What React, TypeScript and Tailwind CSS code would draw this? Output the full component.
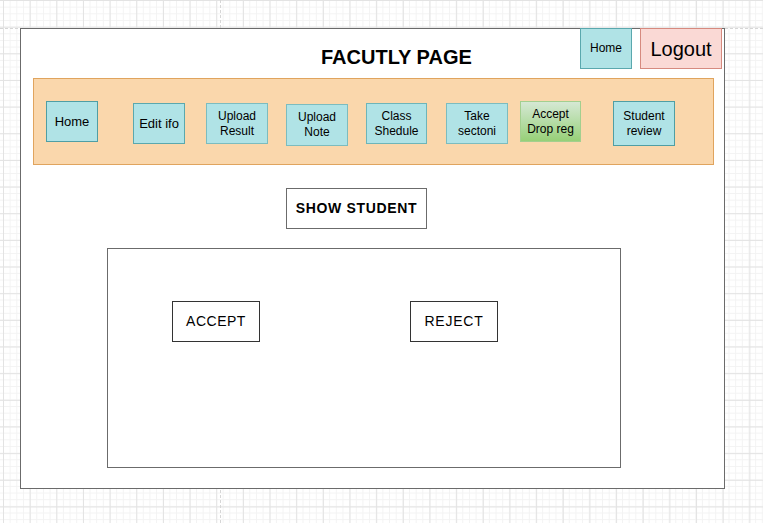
function Btn({
  label,
  className,
}: {
  label: React.ReactNode;
  className: string;
}) {
  return (
    <div
      className={
        "flex shrink-0 items-center justify-center border text-center leading-[15px] text-black " +
        className
      }
    >
      {label}
    </div>
  );
}

export default function App() {
  return (
    <div className="relative h-[523px] w-[763px] overflow-hidden bg-white font-['Liberation_Sans',Arial,sans-serif] [background-image:linear-gradient(to_right,#e3e3e3_1px,transparent_1px),linear-gradient(to_bottom,#e3e3e3_1px,transparent_1px),linear-gradient(to_right,#f3f3f3_1px,transparent_1px),linear-gradient(to_bottom,#f3f3f3_1px,transparent_1px)] [background-size:26.667px_26.667px,26.667px_26.667px,6.667px_6.667px,6.667px_6.667px] [background-position:3px_0px]">
      {/* page break guides */}
      <div className="absolute left-[220px] top-0 h-full border-l border-dashed border-[#d6d6d6]" />
      <div className="absolute left-0 top-[28px] w-full border-t border-dashed border-[#d6d6d6]" />

      {/* frame */}
      <div className="relative ml-[20px] mt-[28px] h-[461px] w-[705px] border border-[#6b6b6b] bg-white">
        <div className="-mt-px flex h-[41px] items-start">
          <div className="ml-[300px] mt-[17px] w-[259px] text-[20px] font-bold leading-[24px] text-black">
            FACUTLY PAGE
          </div>
          <Btn label="Home" className="h-[41px] w-[52px] border-[#5aa8ae] bg-[#b0e3e6] text-[12px]" />
          <div className="ml-[8px] flex h-[41px] w-[82px] items-center justify-center border border-[#d68a7f] bg-[#fad9d5] text-[20px] text-black">
            Logout
          </div>
        </div>

        {/* nav bar */}
        <div className="ml-[12px] mt-[9px] flex h-[87px] w-[681px] items-start border border-[#e0a45e] bg-[#fad7ac]">
          <Btn label="Home" className="ml-[12px] mt-[22px] h-[41px] w-[52px] border-[#4f9ea4] bg-[#b0e3e6] text-[13px]" />
          <Btn label="Edit ifo" className="ml-[35px] mt-[24px] h-[41px] w-[52px] border-[#5aa8ae] bg-[#b0e3e6] text-[13px]" />
          <Btn
            label={<>Upload<br />Result</>}
            className="ml-[21px] mt-[24px] h-[41px] w-[62px] border-[#7cbcbf] bg-[#b0e3e6] text-[12px]"
          />
          <Btn
            label={<>Upload<br />Note</>}
            className="ml-[18px] mt-[25px] h-[42px] w-[62px] border-[#7cbcbf] bg-[#b0e3e6] text-[12px]"
          />
          <Btn
            label={<>Class<br />Shedule</>}
            className="ml-[18px] mt-[24px] h-[41px] w-[61px] border-[#6db5b9] bg-[#b0e3e6] text-[12px]"
          />
          <Btn
            label={<>Take<br />sectoni</>}
            className="ml-[19px] mt-[24px] h-[41px] w-[62px] border-[#7cbcbf] bg-[#b0e3e6] text-[12px]"
          />
          <Btn
            label={<>Accept<br />Drop reg</>}
            className="ml-[12px] mt-[22px] h-[41px] w-[61px] border-[#a3cf8f] bg-gradient-to-b from-[#d5e8d4] to-[#97d077] text-[12px]"
          />
          <Btn
            label={<>Student<br />review</>}
            className="ml-[32px] mt-[22px] h-[45px] w-[62px] border-[#4f9ea4] bg-[#b0e3e6] text-[12px]"
          />
        </div>

        <div className="ml-[265px] mt-[23px] flex h-[41px] w-[141px] items-center justify-center border border-[#6b6b6b] text-[14px] font-bold tracking-[0.65px] text-black">
          SHOW STUDENT
        </div>

        <div className="ml-[86px] mt-[19px] flex h-[220px] w-[514px] items-start border border-[#6b6b6b]">
          <div className="ml-[64px] mt-[52px] flex h-[41px] w-[88px] items-center justify-center border border-[#333] text-[14px] tracking-[0.5px] text-black">
            ACCEPT
          </div>
          <div className="ml-[150px] mt-[52px] flex h-[41px] w-[88px] items-center justify-center border border-[#333] text-[14px] tracking-[0.8px] text-black">
            REJECT
          </div>
        </div>
      </div>
    </div>
  );
}
